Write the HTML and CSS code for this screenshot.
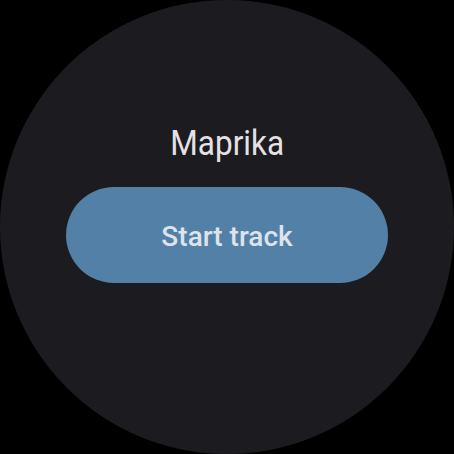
FILE: index.html
```html
<!DOCTYPE html>
<html>
<head>
<meta charset="utf-8">
<title>Maprika</title>
<link rel="stylesheet" href="styles.css">
</head>
<body>
	<div class="watch">
		<div class="title">Maprika</div>
		<button class="start">Start track</button>
	</div>
</body>
</html>
```

FILE: styles.css
```css
html, body
{
	margin: 0;
	padding: 0;
	background: #000000;
}

.watch
{
	width: 454px;
	height: 454px;
	border-radius: 50%;
	background: #1c1b1f;
	display: flex;
	flex-direction: column;
	align-items: center;
	font-family: Roboto, "Noto Sans", sans-serif;
}

.title
{
	margin-top: 123px;
	height: 42px;
	line-height: 42px;
	font-size: 35px;
	color: #e6e1e6;
	transform: scaleX(0.9);
}

.start
{
	margin-top: 22px;
	width: 322px;
	height: 96px;
	border: none;
	border-radius: 48px;
	background: #5380a6;
	color: #dce3ec;
	font-family: Roboto, "Noto Sans", sans-serif;
	font-size: 28px;
	font-weight: 500;
	padding: 2px 0 0 0;
}
```
